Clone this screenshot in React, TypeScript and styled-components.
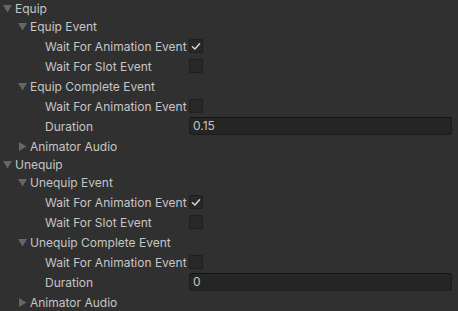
import React from 'react';
import styled, { createGlobalStyle } from 'styled-components';

const GlobalStyle = createGlobalStyle`
  html, body {
    margin: 0;
    padding: 0;
    background: #303030;
  }
  body {
    font-family: Inter, "Noto Sans", sans-serif;
    font-size: 12px;
    color: #c6c6c6;
  }
`;

type Item =
  | { kind: 'foldout'; label: string; depth: number; open: boolean; top?: boolean }
  | { kind: 'toggle'; label: string; depth: number; checked: boolean }
  | { kind: 'field'; label: string; depth: number; value: string };

const items: Item[] = [
  { kind: 'foldout', label: 'Equip', depth: 0, open: true, top: true },
  { kind: 'foldout', label: 'Equip Event', depth: 1, open: true },
  { kind: 'toggle', label: 'Wait For Animation Event', depth: 2, checked: true },
  { kind: 'toggle', label: 'Wait For Slot Event', depth: 2, checked: false },
  { kind: 'foldout', label: 'Equip Complete Event', depth: 1, open: true },
  { kind: 'toggle', label: 'Wait For Animation Event', depth: 2, checked: false },
  { kind: 'field', label: 'Duration', depth: 2, value: '0.15' },
  { kind: 'foldout', label: 'Animator Audio', depth: 1, open: false },
  { kind: 'foldout', label: 'Unequip', depth: 0, open: true, top: true },
  { kind: 'foldout', label: 'Unequip Event', depth: 1, open: true },
  { kind: 'toggle', label: 'Wait For Animation Event', depth: 2, checked: true },
  { kind: 'toggle', label: 'Wait For Slot Event', depth: 2, checked: false },
  { kind: 'foldout', label: 'Unequip Complete Event', depth: 1, open: true },
  { kind: 'toggle', label: 'Wait For Animation Event', depth: 2, checked: false },
  { kind: 'field', label: 'Duration', depth: 2, value: '0' },
  { kind: 'foldout', label: 'Animator Audio', depth: 1, open: false },
];

const App = () => {
  return (
    <Inspector>
      <GlobalStyle />
      {items.map((item, i) => {
        if (item.kind === 'foldout') {
          return (
            <FoldoutRow key={i} $depth={item.depth} $top={!!item.top}>
              <Arrow open={item.open} />
              <span>{item.label}</span>
            </FoldoutRow>
          );
        }
        return (
          <PropertyRow key={i}>
            <Label $depth={item.depth}>{item.label}</Label>
            {item.kind === 'toggle' ? (
              <Checkbox>{item.checked && <Check />}</Checkbox>
            ) : (
              <TextField>{item.value}</TextField>
            )}
          </PropertyRow>
        );
      })}
    </Inspector>
  );
};

const Arrow = ({ open }: { open: boolean }) => (
  <ArrowBox width="9" height="9" viewBox="0 0 9 9">
    {open ? (
      <polygon points="0,1 9,1 4.5,8.5" fill="#666666" />
    ) : (
      <polygon points="1,0 8.5,4.5 1,9" fill="#666666" />
    )}
  </ArrowBox>
);

const Check = () => (
  <svg width="10" height="9" viewBox="0 0 10 9">
    <polyline
      points="1.4,4.8 3.9,7 8.6,1.8"
      fill="none"
      stroke="#dcdcdc"
      strokeWidth="1.4"
      strokeLinecap="round"
      strokeLinejoin="round"
    />
  </svg>
);

export default App;

const Inspector = styled.div`
  display: flex;
  flex-direction: column;
  width: 458px;
  height: 311px;
  overflow: hidden;
`;

const FoldoutRow = styled.div<{ $depth: number; $top: boolean }>`
  display: flex;
  align-items: center;
  gap: 3px;
  height: ${({ $top }) => ($top ? 16 : 20)}px;
  padding-left: ${({ $depth }) => 3 + $depth * 15}px;
  flex-shrink: 0;
`;

const ArrowBox = styled.svg`
  display: block;
  flex-shrink: 0;
`;

const PropertyRow = styled.div`
  display: flex;
  align-items: center;
  height: 20px;
  padding-right: 6px;
  flex-shrink: 0;
`;

const Label = styled.div<{ $depth: number }>`
  width: 189px;
  flex-shrink: 0;
  padding-left: ${({ $depth }) => 15 + $depth * 15}px;
  box-sizing: border-box;
  white-space: nowrap;
  overflow: hidden;
`;

const Checkbox = styled.div`
  width: 14px;
  height: 14px;
  box-sizing: border-box;
  background: #282828;
  border: 1px solid #1e1e1e;
  border-radius: 2px;
  display: flex;
  align-items: center;
  justify-content: center;
`;

const TextField = styled.div`
  flex: 1;
  height: 18px;
  box-sizing: border-box;
  background: #252525;
  border: 1px solid #1c1c1c;
  border-top-color: #141414;
  border-radius: 3px;
  padding: 0 3px;
  line-height: 16px;
`;
